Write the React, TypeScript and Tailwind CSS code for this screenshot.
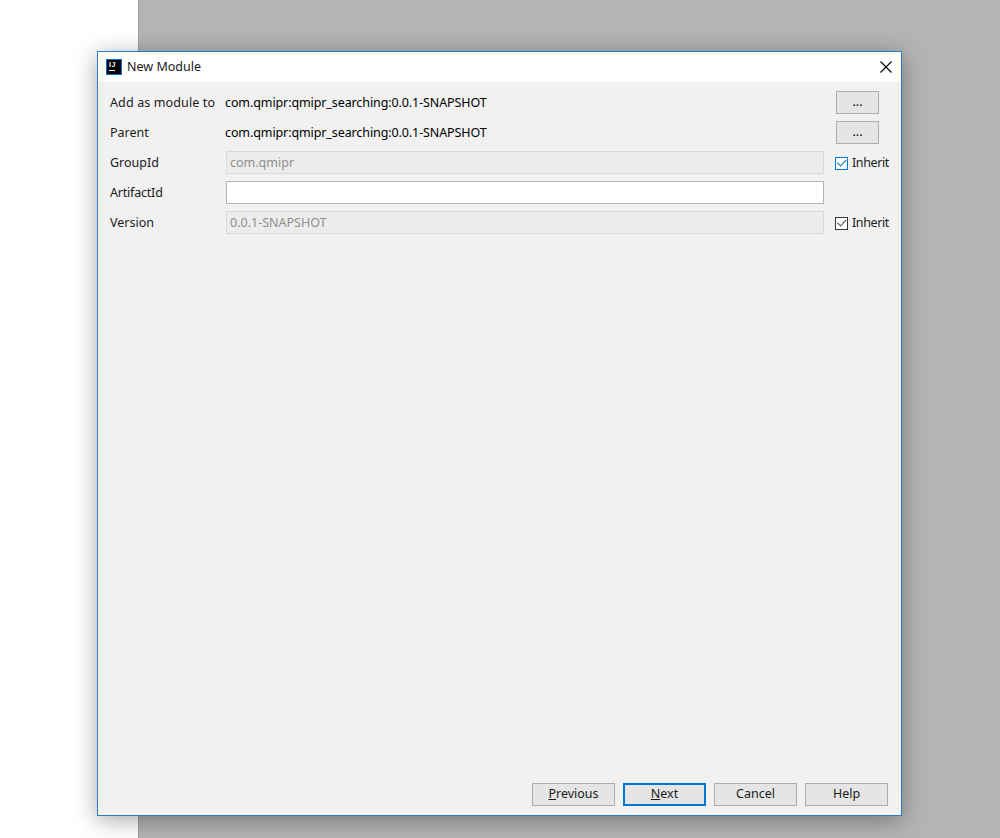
import React from "react";

const font = { fontFamily: '"Noto Sans", "Open Sans", sans-serif' };

const IdeaIcon = () => (
  <div className="relative w-4 h-4 bg-black border border-[#0a6fc2]">
    <span className="absolute left-[2px] top-[1px] text-[7px] leading-[7px] font-bold tracking-[0.5px] text-white" style={{ fontFamily: '"Liberation Sans", sans-serif' }}>IJ</span>
    <div className="absolute left-[2px] bottom-[3px] w-[6px] h-[1px] bg-white" />
  </div>
);

const CloseIcon = () => (
  <svg className="ml-auto" width="12" height="12" viewBox="0 0 12 12" fill="none">
    <path d="M0.5 0.5 L11.5 11.5 M11.5 0.5 L0.5 11.5" stroke="#000000" strokeWidth="1.1" />
  </svg>
);

const SmallButton = () => (
  <button className="flex items-center justify-center ml-[13px] w-[43px] h-[23px] bg-[#e5e5e5] border border-[#adadad] text-[12.5px] text-black">...</button>
);

const Inherit = ({ focused }: { focused?: boolean }) => (
  <label className="flex items-center gap-[4px] ml-[11px]">
    <span className={`w-[13px] h-[13px] mt-[1px] flex items-center justify-center bg-white border ${focused ? "border-[#0078d7]" : "border-[#333333]"}`}>
      <svg width="11" height="11" viewBox="0 0 11 11" fill="none">
        <path d="M1.3 4.7 L4.7 8 L10 2" stroke={focused ? "#2a86d8" : "#666666"} strokeWidth="1.2" />
      </svg>
    </span>
    <span className="pt-[1px] text-[12.5px] tracking-[-0.4px] text-[#1a1a1a]">Inherit</span>
  </label>
);

const Label = ({ children, tracking = "" }: { children: React.ReactNode; tracking?: string }) => (
  <div className={`w-[116px] shrink-0 pt-[1px] text-[12.5px] text-[#1a1a1a] ${tracking}`}>{children}</div>
);

const Value = ({ children }: { children: React.ReactNode }) => (
  <div className="w-[598px] -ml-[1px] pt-[1px] text-[12.5px] tracking-[-0.1px] text-black">{children}</div>
);

const Field = ({ value, disabled }: { value?: string; disabled?: boolean }) => (
  <div className={`w-[598px] h-[23px] px-[3px] pt-[1px] flex items-center text-[12.5px] border ${disabled ? "bg-[#ececec] border-[#d9d9d9] text-[#8f8f8f]" : "bg-white border-[#b4b4b4]"}`}>
    {value}
  </div>
);

const Row = ({ children }: { children: React.ReactNode }) => (
  <div className="flex items-center h-[23px] mb-[7px]">{children}</div>
);

const WizardButton = ({ children, primary }: { children: React.ReactNode; primary?: boolean }) => (
  <button className={`w-[83px] h-[23px] flex items-center justify-center bg-[#e5e5e5] text-[12.5px] text-[#1a1a1a] ${primary ? "border-2 border-[#0078d7]" : "border border-[#adadad]"}`}>
    {children}
  </button>
);

export default function App() {
  return (
    <div className="relative flex w-[1000px] h-[838px] overflow-hidden" style={font}>
      <div className="w-[138px] bg-white" />
      <div className="flex-1 bg-[#b4b4b4] border-l border-[#a0a0a0]" />

      <div className="absolute left-[97px] top-[51px] w-[805px] h-[765px] flex flex-col bg-[#f1f1f1] border border-[#2b7cc4] shadow-[0_4px_22px_rgba(0,0,0,0.35)]">
        <div className="h-[30px] shrink-0 bg-white flex items-center pl-[8px] pr-[9px]">
          <IdeaIcon />
          <span className="ml-[5px] text-[12.5px] text-[#1a1a1a]">New Module</span>
          <CloseIcon />
        </div>

        <div className="flex-1 flex flex-col pl-[12px] pt-[9px]">
          <Row>
            <Label tracking="tracking-[0.13px]">Add as module to</Label>
            <Value>com.qmipr:qmipr_searching:0.0.1-SNAPSHOT</Value>
            <SmallButton />
          </Row>
          <Row>
            <Label>Parent</Label>
            <Value>com.qmipr:qmipr_searching:0.0.1-SNAPSHOT</Value>
            <SmallButton />
          </Row>
          <Row>
            <Label>GroupId</Label>
            <Field value="com.qmipr" disabled />
            <Inherit focused />
          </Row>
          <Row>
            <Label tracking="tracking-[-0.2px]">ArtifactId</Label>
            <Field />
          </Row>
          <Row>
            <Label>Version</Label>
            <Field value="0.0.1-SNAPSHOT" disabled />
            <Inherit />
          </Row>
        </div>

        <div className="flex justify-end gap-[8px] pr-[13px] pb-[9px]">
          <WizardButton><span><u>P</u>revious</span></WizardButton>
          <WizardButton primary><span><u>N</u>ext</span></WizardButton>
          <WizardButton>Cancel</WizardButton>
          <WizardButton>Help</WizardButton>
        </div>
      </div>
    </div>
  );
}
